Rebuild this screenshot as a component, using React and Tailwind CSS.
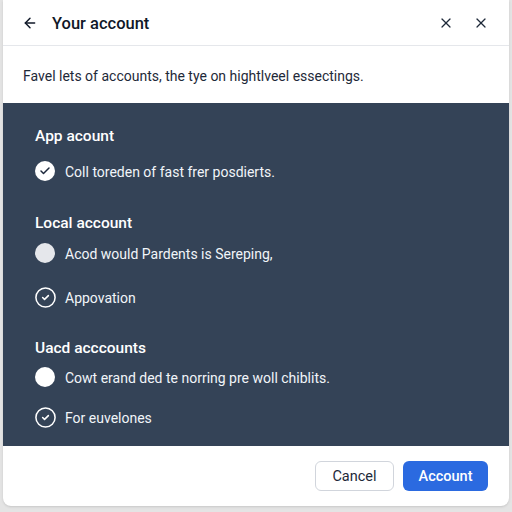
import { ArrowLeft, X, Check, CircleCheck } from 'lucide-react'

function Heading({ children, mt }) {
  return <div className={`${mt} h-5 pt-[2px] flex items-center text-[15.5px] font-medium text-white`}>{children}</div>
}

function Item({ kind, children, mt }) {
  return (
    <div className={`${mt} h-5 flex items-center gap-[10px] text-[14px] text-slate-100`}>
      {kind === 'filled' && (
        <span className="w-5 h-5 rounded-full bg-white flex items-center justify-center">
          <Check className="w-3 h-3 text-slate-800" strokeWidth={3} />
        </span>
      )}
      {kind === 'gray' && <span className="w-5 h-5 rounded-full bg-gray-200" />}
      {kind === 'white' && <span className="w-5 h-5 rounded-full bg-white" />}
      {kind === 'outline' && (
        <span className="w-5 h-5 flex items-center justify-center">
          <CircleCheck className="w-[23px] h-[23px] shrink-0 text-white" strokeWidth={1.6} />
        </span>
      )}
      <span className="pt-[2px]">{children}</span>
    </div>
  )
}

export default function App() {
  return (
    <div className="w-[512px] h-[512px] bg-[#e4e4e4] overflow-hidden" style={{ fontFamily: 'Roboto, "Liberation Sans", sans-serif' }}>
      <div className="ml-[3px] w-[506px] h-[506px] bg-white rounded-b-lg shadow flex flex-col">
        <div className="h-[46px] border-b border-gray-200 flex items-center pl-[19px] pr-[20px]">
          <ArrowLeft className="w-4 h-4 text-gray-900" strokeWidth={2.2} />
          <span className="ml-[14px] pt-[3px] text-[16.5px] font-medium text-gray-900">Your account</span>
          <div className="ml-auto flex items-center gap-[19px]">
            <X className="w-4 h-4 text-gray-800" strokeWidth={1.8} />
            <X className="w-4 h-4 text-gray-800" strokeWidth={1.8} />
          </div>
        </div>
        <div className="h-[57px] pt-[3px] flex items-center pl-[20px] text-[14px] text-gray-800">
          Favel lets of accounts, the tye on hightlveel essectings.
        </div>
        <div className="h-[343px] bg-[#344357] pl-[32px] flex flex-col">
          <Heading mt="mt-[23px]">App acount</Heading>
          <Item kind="filled" mt="mt-[15px]">Coll toreden of fast frer posdierts.</Item>
          <Heading mt="mt-[32px]">Local account</Heading>
          <Item kind="gray" mt="mt-[10px]">Acod would Pardents is Sereping,</Item>
          <Item kind="outline" mt="mt-[24px]">Appovation</Item>
          <Heading mt="mt-[31px]">Uacd acccounts</Heading>
          <Item kind="white" mt="mt-[9px]">Cowt erand ded te norring pre woll chiblits.</Item>
          <Item kind="outline" mt="mt-[20px]">For euvelones</Item>
        </div>
        <div className="flex-1 flex justify-end items-start pt-[15px] pr-[21px] gap-[9px]">
          <button className="w-[79px] h-[30px] pt-[2px] rounded-md border border-gray-300 bg-white text-[14.5px] text-gray-800">Cancel</button>
          <button className="w-[85px] h-[30px] pt-[2px] rounded-md bg-[#2b6ae0] text-[14.5px] font-medium text-white">Account</button>
        </div>
      </div>
    </div>
  )
}
